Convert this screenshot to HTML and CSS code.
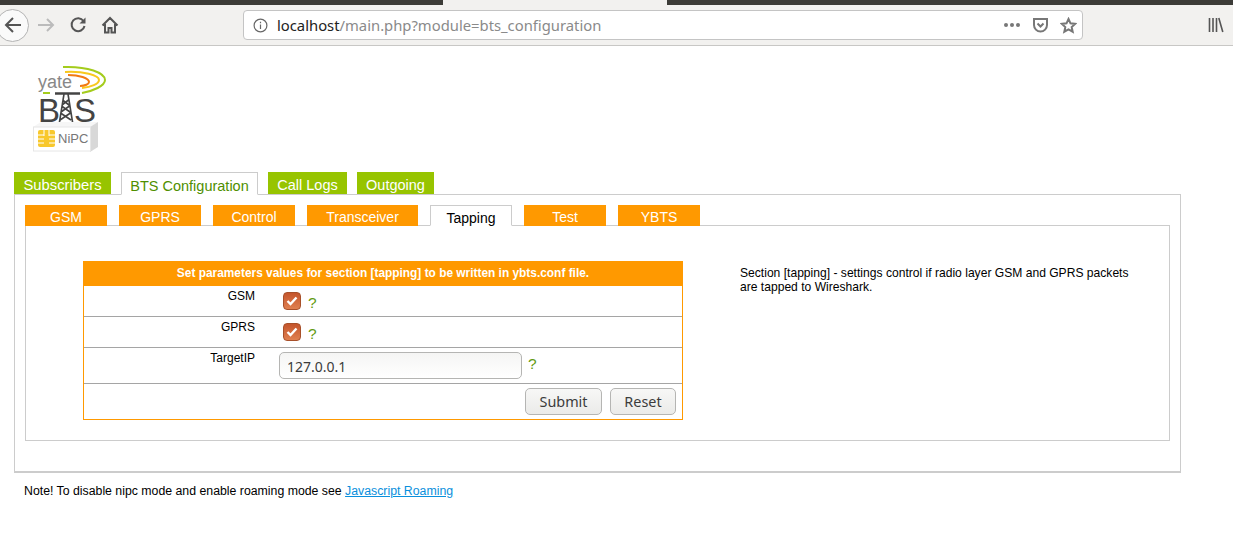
FILE: index.html
```html
<!DOCTYPE html>
<html lang="en">
<head>
  <meta charset="UTF-8" />
  <title>BTS Configuration</title>
  <link rel="stylesheet" href="styles.css">
</head>
<body>
  <div class="tabstrip"><div class="tabstrip-active"></div></div>
  <div class="toolbar">
    <div class="back-btn">
      <svg width="20" height="20" viewBox="0 0 20 20" fill="none" stroke="#555" stroke-width="2"><path d="M18 10H3M10 3l-7 7 7 7"/></svg>
    </div>
    <svg class="nav-icon fwd" width="18" height="18" viewBox="0 0 18 18" fill="none" stroke="#bbb" stroke-width="2"><path d="M1 9h15M10 3l6 6-6 6"/></svg>
    <svg class="nav-icon reload" width="18" height="18" viewBox="0 0 18 18" fill="none" stroke="#555" stroke-width="2"><path d="M14.500 5A6.500 6.500 0 1 0 15.500 10"/><path d="M16.500 1.500v6h-6z" fill="#555" stroke="none"/></svg>
    <svg class="nav-icon home" width="18" height="18" viewBox="0 0 18 18" fill="none" stroke="#555" stroke-width="2"><path d="M1.500 9.500L9 2l7.500 7.500M4 8v8.500h3.500V12h3v4.500H14V8"/></svg>
    <div class="urlbar">
      <svg class="info" width="15" height="15" viewBox="0 0 15 15" fill="none" stroke="#666" stroke-width="1.200"><circle cx="7.500" cy="7.500" r="6.400"/><path d="M7.500 6.500v4.500M7.500 3.800v1.500"/></svg>
      <span class="url"><span class="url-host">localhost</span>/main.php?module=bts_configuration</span>
      <span class="dots"><i></i><i></i><i></i></span>
      <svg class="pocket" width="17" height="16" viewBox="0 0 17 16" fill="none" stroke="#777" stroke-width="2"><path d="M2 2h13v6a6.500 6.500 0 0 1-13 0z"/><path d="M5.500 6.500l3 3 3-3"/></svg>
      <svg class="star" width="17" height="17" viewBox="0 0 17 17" fill="none" stroke="#777" stroke-width="2"><path d="M8.500 2l2 4.300 4.700.6-3.500 3.200 1 4.600-4.200-2.300-4.200 2.300 1-4.600L1.800 6.900l4.700-.6z"/></svg>
    </div>
    <svg class="library" width="16" height="16" viewBox="0 0 16 16" fill="none" stroke="#555" stroke-width="1.600"><path d="M1.500 1v14M5 1v14M8.500 1v14M10.800 1l4 14"/></svg>
  </div>

  <div class="page">
    <div class="logo">
      <svg width="74" height="92" viewBox="0 0 74 92">
        <path d="M30 5C55 4 72 11 72 18C72 24 60 29 49 31" fill="none" stroke="#a4cc1c" stroke-width="2"/>
        <path d="M32 10C50 9 66 13 66 18C66 22 58 25 49 26" fill="none" stroke="#f8c81c" stroke-width="2"/>
        <path d="M35 13C46 13 56 16 56 20C56 22 52 24 47 24" fill="none" stroke="#f27a12" stroke-width="2"/>
        <path d="M10 31h7" stroke="#a4cc1c" stroke-width="2"/>
        <text x="5" y="26" class="logo-yate">yate</text>
        <text x="5" y="60" class="logo-bts">B</text>
        <text x="41" y="60" class="logo-bts">S</text>
        <path d="M22 31.500h25" stroke="#444" stroke-width="2.500"/>
        <path d="M31 32l-5 31M35 32l5 31M29.500 38l6.500 5M35.500 38l-6.500 5M28.500 44l8.500 6M36.500 44l-8.500 6M27.500 51l10.500 7M37.500 51l-10.500 7" fill="none" stroke="#444" stroke-width="1.600"/>
        <path d="M0 65l8-5h57l-8 5z" fill="#f6f6f6"/>
        <path d="M57 65l8-5v25l-8 5z" fill="#d8d8d8"/>
        <rect x="0.500" y="65" width="57" height="24" fill="#fff" stroke="#e6e6e6"/>
        <rect x="5" y="68" width="17" height="17" rx="2" fill="#f8c82c"/>
        <path d="M5 73h6M5 77h6M5 81h6M16 73h6M16 77h6M16 81h6M11 68v6M16 68v6" stroke="#fff" stroke-width="1"/>
        <text x="25" y="81" class="logo-nipc">NiPC</text>
      </svg>
    </div>

    <div class="main-tabs">
      <a class="tab tab-subs">Subscribers</a>
      <a class="tab tab-active">BTS Configuration</a>
      <a class="tab tab-logs">Call Logs</a>
      <a class="tab tab-out">Outgoing</a>
    </div>
    <div class="main-box">
      <div class="sub-tabs">
        <a class="subtab">GSM</a>
        <a class="subtab">GPRS</a>
        <a class="subtab">Control</a>
        <a class="subtab subtab-wide">Transceiver</a>
        <a class="subtab subtab-active">Tapping</a>
        <a class="subtab">Test</a>
        <a class="subtab">YBTS</a>
      </div>
      <div class="sub-box">
        <form class="conf-form">
          <div class="form-title">Set parameters values for section [tapping] to be written in ybts.conf file.</div>
          <div class="row row-check">
            <label class="row-label">GSM</label>
            <div class="row-field"><span class="check"><svg width="12" height="10" viewBox="0 0 12 10" fill="none" stroke="#fff" stroke-width="2.400"><path d="M1.500 5l3 3 6-6.500"/></svg></span><span class="hint">?</span></div>
          </div>
          <div class="row row-check">
            <label class="row-label">GPRS</label>
            <div class="row-field"><span class="check"><svg width="12" height="10" viewBox="0 0 12 10" fill="none" stroke="#fff" stroke-width="2.400"><path d="M1.500 5l3 3 6-6.500"/></svg></span><span class="hint">?</span></div>
          </div>
          <div class="row row-text">
            <label class="row-label">TargetIP</label>
            <div class="row-field"><input class="text-input" type="text" value="127.0.0.1"><span class="hint hint-text">?</span></div>
          </div>
          <div class="row-buttons">
            <button type="button" class="btn">Submit</button>
            <button type="button" class="btn btn-reset">Reset</button>
          </div>
        </form>
        <div class="side-note">Section [tapping] - settings control if radio layer GSM and GPRS packets are tapped to Wireshark.</div>
      </div>
    </div>
    <p class="note">Note! To disable nipc mode and enable roaming mode see <a class="note-link" href="#">Javascript Roaming</a></p>
  </div>
</body>
</html>
```

FILE: styles.css
```css
html, body {
  margin: 0;
  padding: 0;
  height: 540px;
  overflow: hidden;
  background: #fff;
  font-family: "Liberation Sans", Arial, sans-serif;
  font-size: 12px;
  color: #000;
}

/* browser chrome */
.tabstrip {
  height: 5px;
  background: #3c3b37;
  position: relative;
}
.tabstrip-active {
  position: absolute;
  left: 443px;
  top: 0;
  width: 224px;
  height: 5px;
  background: #f2f1ef;
}
.toolbar {
  height: 40px;
  background: #f2f1ef;
  border-bottom: 1px solid #c8c7c5;
  display: flex;
  align-items: center;
}
.back-btn {
  width: 31px;
  height: 31px;
  margin-left: -4px;
  border: 1px solid #b4b4b4;
  border-radius: 50%;
  background: #fafafa;
  display: flex;
  align-items: center;
  justify-content: center;
  flex-shrink: 0;
}
.nav-icon { flex-shrink: 0; }
.fwd { margin-left: 8px; }
.reload { margin-left: 14px; }
.home { margin-left: 14px; }
.urlbar {
  width: 838px;
  height: 28px;
  margin-left: 124px;
  background: #fff;
  border: 1px solid #c4c4c4;
  border-radius: 4px;
  display: flex;
  align-items: center;
  flex-shrink: 0;
}
.info { margin-left: 9px; }
.url {
  margin-left: 9px;
  font-family: "Noto Sans", sans-serif;
  font-size: 14.800px;
  color: #8a8a8a;
  flex: 1;
}
.url-host { color: #222; }
.dots {
  display: flex;
  gap: 2px;
}
.dots i {
  width: 4px;
  height: 4px;
  border-radius: 50%;
  background: #777;
}
.pocket { margin-left: 12px; }
.star { margin-left: 11px; margin-right: 5px; }
.library { margin-left: 125px; }

/* page */
.page {
  padding: 0 14px;
}
.logo {
  height: 126px;
  padding: 16px 0 0 19px;
  box-sizing: border-box;
}
.logo-yate { font-size: 18px; fill: #888; }
.logo-bts { font-size: 33px; fill: #444; }
.logo-nipc { font-size: 13px; fill: #777; }

.main-tabs {
  display: flex;
  gap: 10px;
  height: 22px;
  position: relative;
  z-index: 1;
}
.tab {
  display: block;
  height: 22px;
  line-height: 26px;
  background: #97c400;
  color: #fff;
  font-size: 14.500px;
  text-align: center;
}
.tab-subs { width: 97px; font-size: 14.800px; }
.tab-logs { width: 79px; }
.tab-out { width: 77px; }
.tab-active {
  width: 137px;
  height: 23px;
  box-sizing: border-box;
  background: #fff;
  color: #4f8f00;
  border: 1px solid #ccc;
  border-bottom: 1px solid #fff;
}
.main-box {
  width: 1167px;
  height: 279px;
  border: 1px solid #ccc;
  border-bottom-width: 2px;
  padding: 10px;
  box-sizing: border-box;
}
.sub-tabs {
  display: flex;
  gap: 12px;
  height: 21px;
  position: relative;
  z-index: 1;
}
.subtab {
  display: block;
  width: 82px;
  height: 21px;
  line-height: 24px;
  background: #ff9900;
  color: #fff;
  font-size: 14px;
  text-align: center;
}
.subtab-wide { width: 111px; }
.subtab-active {
  box-sizing: border-box;
  background: #fff;
  color: #000;
  border: 1px solid #ccc;
  border-bottom: 1px solid #fff;
}
.sub-box {
  width: 1143px;
  height: 214px;
  margin-top: -1px;
  border: 1px solid #ccc;
  display: flex;
  align-items: flex-start;
}
.conf-form {
  width: 600px;
  margin-left: 57px;
  margin-top: 35px;
  border: 1px solid #ff9900;
  border-top: none;
  box-sizing: border-box;
}
.form-title {
  background: #ff9900;
  color: #fff;
  font-weight: bold;
  font-size: 11.900px;
  text-align: center;
  height: 25px;
  line-height: 25px;
  margin: 0 -1px;
}
.row {
  display: flex;
  border-bottom: 1px solid #a5a5a5;
}
.row-check { height: 30px; }
.row-text { height: 35px; }
.row-label {
  width: 171px;
  text-align: right;
  padding-top: 3px;
  line-height: 14px;
}
.row-field {
  display: flex;
  align-items: flex-start;
}
.check {
  width: 16px;
  height: 16px;
  margin-left: 28px;
  margin-top: 6px;
  border-radius: 4px;
  border: 1px solid #a8502a;
  background: linear-gradient(#c4552c, #e08050);
  display: flex;
  align-items: center;
  justify-content: center;
}
.hint {
  color: #5f9a10;
  font-size: 15.500px;
  margin-left: 7px;
  margin-top: 8px;
}
.hint-text {
  margin-top: 7px;
  margin-left: 6px;
}
.text-input {
  width: 243px;
  height: 27px;
  box-sizing: border-box;
  margin-left: 24px;
  margin-top: 4px;
  padding: 1px 7px 0;
  border: 1px solid #b5b5b3;
  border-radius: 5px;
  background: linear-gradient(#f5f5f4, #fff);
  font-family: "Noto Sans", sans-serif;
  font-size: 14px;
  color: #3c3c3c;
}
.row-buttons {
  display: flex;
  justify-content: flex-end;
  gap: 8px;
  height: 35px;
  padding-right: 6px;
  padding-top: 4px;
  box-sizing: border-box;
}
.btn {
  width: 77px;
  height: 27px;
  border: 1px solid #b5b5b3;
  border-radius: 5px;
  background: linear-gradient(#f7f7f6, #ebebe9);
  font-family: "Noto Sans", sans-serif;
  font-size: 14.400px;
  color: #3c3c3c;
  padding: 0;
}
.btn-reset { width: 66px; }
.side-note {
  width: 400px;
  margin-left: 57px;
  margin-top: 40px;
  font-size: 12.100px;
  line-height: 14px;
}
.note {
  margin: 11px 0 0 10px;
  font-size: 12.300px;
  line-height: 14px;
}
.note-link {
  color: #0a8fdc;
  text-decoration: underline;
}
```
